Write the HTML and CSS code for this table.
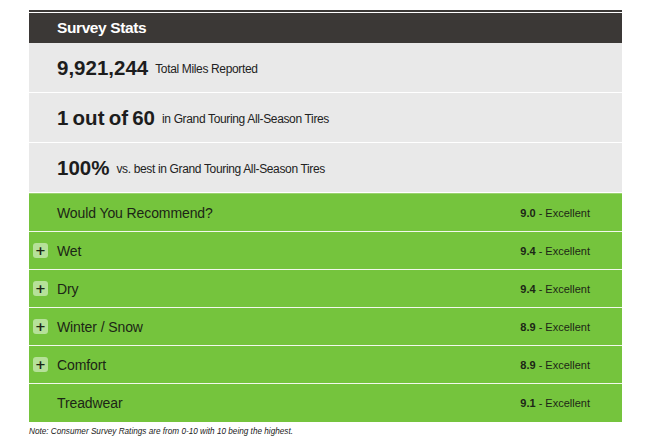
FILE: index.html
```html
<!DOCTYPE html>
<html>
<head>
<meta charset="utf-8">
<link rel="stylesheet" href="styles.css">
</head>
<body>
<div class="wrap">
  <div class="header">Survey Stats</div>
  <div class="stat"><span class="big">9,921,244</span><span class="small">Total Miles Reported</span></div>
  <div class="stat"><span class="big">1 out of 60</span><span class="small">in Grand Touring All-Season Tires</span></div>
  <div class="stat"><span class="big">100%</span><span class="small">vs. best in Grand Touring All-Season Tires</span></div>
  <div class="ratings">
    <div class="rating"><span class="slot"></span><span class="label">Would You Recommend?</span><span class="score"><b>9.0</b> - Excellent</span></div>
    <div class="rating"><span class="slot"><span class="plus">+</span></span><span class="label">Wet</span><span class="score"><b>9.4</b> - Excellent</span></div>
    <div class="rating"><span class="slot"><span class="plus">+</span></span><span class="label">Dry</span><span class="score"><b>9.4</b> - Excellent</span></div>
    <div class="rating"><span class="slot"><span class="plus">+</span></span><span class="label">Winter / Snow</span><span class="score"><b>8.9</b> - Excellent</span></div>
    <div class="rating"><span class="slot"><span class="plus">+</span></span><span class="label">Comfort</span><span class="score"><b>8.9</b> - Excellent</span></div>
    <div class="rating"><span class="slot"></span><span class="label">Treadwear</span><span class="score"><b>9.1</b> - Excellent</span></div>
  </div>
  <div class="note">Note: Consumer Survey Ratings are from 0-10 with 10 being the highest.</div>
</div>
</body>
</html>
```
FILE: styles.css
```css
html, body {
  margin: 0;
  padding: 0;
  background: #ffffff;
}
body {
  font-family: "Liberation Sans", Arial, sans-serif;
  color: #222;
}
.wrap {
  margin: 10px 0 0 29px;
  width: 593px;
  border-top: 2px solid #3b3836;
}
.header {
  margin-top: 1px;
  height: 30px;
  background: #3b3836;
  color: #fff;
  font-weight: bold;
  font-size: 15.5px;
  letter-spacing: -0.4px;
  display: flex;
  align-items: center;
  padding-left: 28px;
}
.stat {
  height: 49px;
  background: #e9e9e9;
  border-bottom: 1px solid #fff;
  display: flex;
  align-items: center;
  padding-left: 28px;
}
.big {
  font-weight: bold;
  font-size: 20.5px;
  color: #1d1d1d;
  word-spacing: -1.5px;
  margin-right: 7px;
}
.small {
  font-size: 12px;
  letter-spacing: -0.35px;
  color: #222;
  padding-top: 3px;
}
.ratings {
  border-top: 1px solid #9bd36f;
}
.rating {
  height: 37px;
  background: #75c43d;
  border-bottom: 1px solid #f2f8ec;
  display: grid;
  grid-template-columns: 24px 1fr auto;
  align-items: center;
  padding: 0 32px 0 4px;
  color: #1c2616;
}
.rating:last-child {
  border-bottom: none;
  height: 38px;
}
.slot {
  display: flex;
  align-items: center;
}
.plus {
  width: 15px;
  height: 15px;
  border-radius: 3px;
  background: #b6e199;
  color: #1c2616;
  font-family: "DejaVu Sans", sans-serif;
  font-size: 13px;
  line-height: 15px;
  text-align: center;
  font-weight: bold;
}
.label {
  font-size: 14px;
  letter-spacing: -0.1px;
}
.score {
  font-size: 11px;
}
.score b {
  font-size: 11px;
}
.note {
  margin-top: 5px;
  font-style: italic;
  font-size: 8.2px;
  color: #222;
}
```
